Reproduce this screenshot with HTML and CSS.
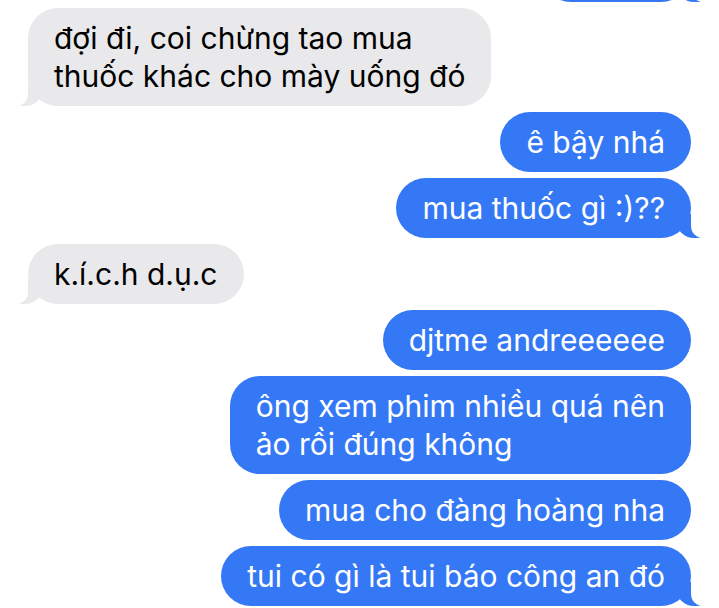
FILE: index.html
```html
<!DOCTYPE html>
<html lang="vi">
<head>
  <meta charset="UTF-8" />
  <title>Tin nhắn</title>
  <link rel="stylesheet" href="styles.css">
</head>
<body>
  <!-- Conversation thread -->
  <div class="thread">
    <div class="bubble me tail cut-off"></div>

    <div class="bubble them tail">đợi đi, coi chừng tao mua<br>thuốc khác cho mày uống đó</div>

    <div class="bubble me">ê bậy nhá</div>
    <div class="bubble me tail">mua thuốc gì :)??</div>

    <div class="bubble them tail">k.í.c.h d.ụ.c</div>

    <div class="bubble me">djtme andreeeeee</div>
    <div class="bubble me">ông xem phim nhiều quá nên<br>ảo rồi đúng không</div>
    <div class="bubble me">mua cho đàng hoàng nha</div>
    <div class="bubble me tail">tui có gì là tui báo công an đó</div>
  </div>
</body>
</html>
```

FILE: styles.css
```css
/*
  --------------------------------------------
  BASIC RESETS AND LAYOUT
  --------------------------------------------
*/
* {
  margin: 0;
  padding: 0;
  box-sizing: border-box;
}

body {
  font-family: Inter, "Noto Sans", sans-serif;
  background-color: #ffffff;
  color: #000;
  height: 100vh;
  overflow: hidden;
}

.thread {
  display: flex;
  flex-direction: column;
  gap: 6px;
  padding: 0 28px;
}

/*
  --------------------------------------------
  BUBBLES
  --------------------------------------------
*/
.bubble {
  position: relative;
  padding: 11px 26px;
  border-radius: 30px;
  font-size: 30px;
  line-height: 38px;
  white-space: nowrap;
}

.them {
  align-self: flex-start;
  background-color: #e9e9eb;
  color: #000;
}

.me {
  align-self: flex-end;
  background-color: #3478f6;
  color: #fff;
}

/* the bubble scrolled off the top edge */
.cut-off {
  margin-top: -58px;
  width: 150px;
  height: 60px;
}

/*
  Tails: a coloured curl plus a white mask cut into it
*/
.tail::before,
.tail::after {
  content: "";
  position: absolute;
  bottom: 0;
  height: 24px;
}

.them.tail::before {
  left: -9px;
  width: 24px;
  background-color: #e9e9eb;
  border-bottom-right-radius: 18px;
}

.them.tail::after {
  left: -14px;
  width: 14px;
  background-color: #fff;
  border-bottom-right-radius: 12px;
}

.me.tail::before {
  right: -9px;
  width: 24px;
  background-color: #3478f6;
  border-bottom-left-radius: 18px;
}

.me.tail::after {
  right: -14px;
  width: 14px;
  background-color: #fff;
  border-bottom-left-radius: 12px;
}
```
